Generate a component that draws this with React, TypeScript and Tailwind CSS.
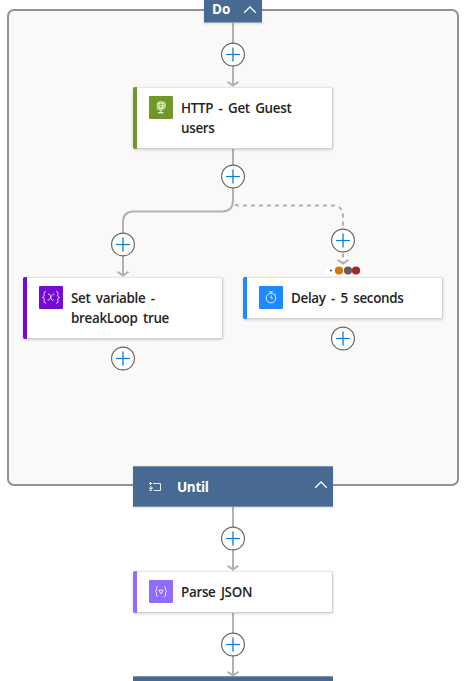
import React from "react";

const font = "font-['Segoe_UI','Open_Sans','Noto_Sans',sans-serif]";

function Edges() {
  return (
    <svg className="absolute inset-0" width="469" height="681" fill="none" stroke="#b1b0b7" strokeWidth="2">
      <path d="M233 22V85M233 148V200Q233 211.5 222 211.5H134Q123 211.5 123 222V275M233 506V570M233 612V675" />
      <path d="M235 204.5Q237 205.5 240 205.5H332Q343 205.5 343 216V264" strokeDasharray="4 4" strokeWidth="2" />
      <g strokeWidth="2">
        <path d="M227.5 81.7L233 85.6L238.5 81.7" />
        <path d="M117.5 271.7L123 275.6L128.5 271.7" />
        <path d="M337.5 259.7L343 263.6L348.5 259.7" />
        <path d="M227.5 565.7L233 569.6L238.5 565.7" />
        <path d="M227.5 671.7L233 675.6L238.5 671.7" />
      </g>
    </svg>
  );
}

function AddButton({ place }: { place: string }) {
  return (
    <button className={`absolute h-[25px] w-6 ${place}`} aria-label="Add step">
      <svg width="24" height="25" fill="none" className="block">
        <circle cx="12" cy="12.5" r="11.4" fill="#fff" stroke="#65625f" strokeWidth="1.15" />
        <path d="M12 5.5V19.5" stroke="#58abe8" strokeWidth="2" />
        <path d="M5 12.5H19" stroke="#0c7cd5" strokeWidth="1.2" />
      </svg>
    </button>
  );
}

function Chevron() {
  return (
    <svg width="14" height="9" viewBox="0 0 14 9" fill="none" className="block">
      <path d="M1.2 7.7L7 2L12.8 7.7" stroke="#fff" strokeWidth="1.3" />
    </svg>
  );
}

function Globe() {
  return (
    <svg width="24" height="23" viewBox="0 0 24 23" fill="none" stroke="#f5f9e9" strokeWidth=".8">
      <circle cx="11.7" cy="9.3" r="3.7" />
      <ellipse cx="11.7" cy="9.3" rx="1.7" ry="3.7" />
      <path d="M8 9.3H15.4M8.6 7.3H14.8M8.6 11.3H14.8M14.8 5.3C18 8.4 16.3 14.1 11.7 14.1C9.8 14.1 8.5 13.5 7.6 12.5M11.8 14.2V16.5" />
      <path d="M9.2 16.7H14.4" strokeWidth="1.2" />
    </svg>
  );
}

function Braces({ parse = false }: { parse?: boolean }) {
  if (parse) {
    return (
      <svg width="24" height="23" viewBox="0 0 24 23" fill="none" stroke="#e9e0ff" strokeWidth="1">
        <path d="M9 6.5C7.2 6.5 7.5 7.5 7.5 9C7.5 10.7 7.2 11.3 6 11.5C7.2 11.7 7.5 12.3 7.5 14C7.5 15.5 7.2 16.5 9 16.5M15 6.5C16.8 6.5 16.5 7.5 16.5 9C16.5 10.7 16.8 11.3 18 11.5C16.8 11.7 16.5 12.3 16.5 14C16.5 15.5 16.8 16.5 15 16.5" />
        <path d="M9.8 10.1H14.2L12 14Z" />
      </svg>
    );
  }
  return (
    <svg width="24" height="23" viewBox="0 0 24 23" fill="none" stroke="#f0ddff" strokeWidth="1">
      <path d="M6.8 5.5C4.9 5.5 5.2 6.8 5.2 8.6C5.2 10.6 4.9 11.2 3.5 11.5C4.9 11.8 5.2 12.4 5.2 14.2C5.2 16.1 4.9 17.2 6.8 17.2M17.2 5.5C19.1 5.5 18.8 6.8 18.8 8.6C18.8 10.6 19.1 11.2 20.5 11.5C19.1 11.8 18.8 12.4 18.8 14.2C18.8 16.1 19.1 17.2 17.2 17.2" />
      <path d="M9 8.4C10.7 7.3 11.2 8.8 11.7 11C12.3 13.8 13 15 14.7 13.7M15.4 8.3C14 7.3 12.6 9.9 11.7 11.3C10.6 13.2 9.8 14.9 8.5 14" />
    </svg>
  );
}

function Stopwatch() {
  return (
    <svg width="24" height="23" viewBox="0 0 24 23" fill="none" stroke="#e8f3ff" strokeWidth=".9">
      <circle cx="12" cy="12.1" r="4.8" />
      <path d="M10 5.8H14M12 6V7.3M12 9.2V12.2H14M15.5 7.9L16.8 9.1" />
    </svg>
  );
}

type CardProps = {
  place: string;
  accent: string;
  icon: React.ReactNode;
  children: React.ReactNode;
};

function Card({ place, accent, icon, children }: CardProps) {
  return (
    <div className={`absolute flex w-[200px] rounded-[2px] border-r border-b border-t border-[#d2d0ce] border-t-[#e7e6e5] bg-white shadow-[0_1px_3px_rgba(0,0,0,0.17)] ${place}`}>
      <div className={`-my-px w-1 shrink-0 rounded-l-[2px] ${accent}`} />
      <div className={`mt-2 ml-3 h-[23px] w-6 shrink-0 rounded-[1px] ${accent}`}>{icon}</div>
      <div className="ml-2 pt-[10px] text-[13.4px] leading-5 font-semibold tracking-[-0.3px] whitespace-nowrap text-[#242424] [word-spacing:2.2px]">{children}</div>
    </div>
  );
}

export default function App() {
  return (
    <div className={`relative h-[681px] w-[469px] overflow-hidden bg-white ${font}`}>
      <div className="absolute top-[9px] left-[7px] h-[477px] w-[452px] rounded-[7px] border-2 border-[#929292] bg-[#faf9f8]" />
      <Edges />

      <div className="absolute top-[-4px] left-[204px] flex h-[27px] w-[58px] items-center justify-between border-b border-[#91a5bd] bg-[#486991] pr-[5px] pl-2 text-[13.5px] font-bold text-white shadow-sm">
        <span className="pt-px">Do</span><Chevron />
      </div>

      <Card place="top-[87px] left-[133px] h-[62px]" accent="bg-[#709727]" icon={<Globe />}>
        <div>HTTP - Get Guest</div><div>users</div>
      </Card>
      <Card place="top-[277px] left-[23px] h-[62px]" accent="bg-[#770bd6]" icon={<Braces />}>
        <div>Set variable -</div><div>breakLoop true</div>
      </Card>
      <Card place="top-[277px] left-[243px] h-[42px]" accent="bg-[#1e88ff]" icon={<Stopwatch />}>
        <div>Delay - 5 seconds</div>
      </Card>

      <div className="absolute top-[265px] left-[325px] h-[11px] w-9 rounded-full bg-white">
        <svg width="36" height="11" className="block">
          <circle cx="6" cy="5.5" r="1" fill="#444" />
          <circle cx="14" cy="5.5" r="4.1" fill="#da7604" />
          <circle cx="23" cy="5.5" r="4.1" fill="#605e5c" />
          <circle cx="31" cy="5.5" r="4.1" fill="#a4262c" />
        </svg>
      </div>

      <div className="absolute top-[466px] left-[133px] flex h-[41px] w-[200px] items-center border-y border-[#7b93b0] bg-[#486991] pl-4 text-[13.5px] font-bold text-white shadow-sm">
        <svg width="12" height="10" viewBox="0 0 12 10" fill="none" stroke="#e4ebf3">
          <path d="M4 1.5H11.5V8.5H4.5" />
          <path d="M0 1.5H3M1.5 0V3M2 4V7M.3 5.7L2 7.3L3.7 5.7M.5 8.5H2.8" strokeWidth="1.1" />
        </svg>
        <span className="ml-4 pt-[2px] tracking-[-0.35px]">Until</span>
        <div className="mr-[5px] mb-1 ml-auto"><Chevron /></div>
      </div>

      <Card place="top-[571px] left-[133px] h-[42px]" accent="bg-[#8f6cff]" icon={<Braces parse />}>
        <div>Parse JSON</div>
      </Card>
      <div className="absolute top-[676px] left-[133px] h-[42px] w-[200px] border-t border-[#7b93b0] bg-[#486991]" />

      <AddButton place="top-[42px] left-[221px]" />
      <AddButton place="top-[164px] left-[221px]" />
      <AddButton place="top-[232px] left-[111px]" />
      <AddButton place="top-[228px] left-[331px]" />
      <AddButton place="top-[346px] left-[111px]" />
      <AddButton place="top-[326px] left-[331px]" />
      <AddButton place="top-[526px] left-[221px]" />
      <AddButton place="top-[632px] left-[221px]" />
    </div>
  );
}
